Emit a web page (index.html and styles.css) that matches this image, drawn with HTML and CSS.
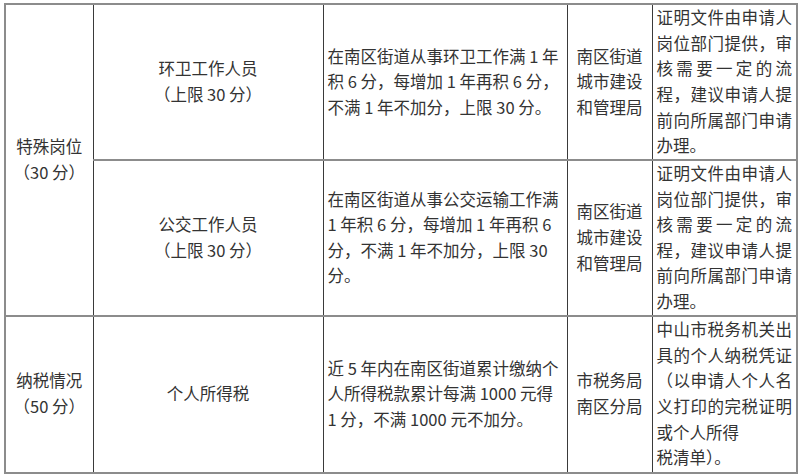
FILE: index.html
```html
<!DOCTYPE html>
<html lang="zh-CN">
<head>
<meta charset="utf-8">
<link rel="stylesheet" href="styles.css">
</head>
<body>
<table class="grid">
  <colgroup>
    <col class="c1"><col class="c2"><col class="c3"><col class="c4"><col class="c5">
  </colgroup>
  <tr class="r1">
    <td class="center" rowspan="2">特殊岗位<br>（30 分）</td>
    <td class="center">环卫工作人员<br>（上限 30 分）</td>
    <td class="desc">在南区街道从事环卫工作满 1 年<br>积 6 分，每增加 1 年再积 6 分，<br>不满 1 年不加分，上限 30 分。</td>
    <td class="center">南区街道城市建设和管理局</td>
    <td class="note">证明文件由申请人岗位部门提供，审核需要一定的流程，建议申请人提前向所属部门申请办理。</td>
  </tr>
  <tr class="r2">
    <td class="center">公交工作人员<br>（上限 30 分）</td>
    <td class="desc">在南区街道从事公交运输工作满<br>1 年积 6 分，每增加 1 年再积 6<br>分，不满 1 年不加分，上限 30<br>分。</td>
    <td class="center">南区街道城市建设和管理局</td>
    <td class="note">证明文件由申请人岗位部门提供，审核需要一定的流程，建议申请人提前向所属部门申请办理。</td>
  </tr>
  <tr class="r3">
    <td class="center">纳税情况<br>（50 分）</td>
    <td class="center">个人所得税</td>
    <td class="desc">近 5 年内在南区街道累计缴纳个<br>人所得税款累计每满 1000 元得<br>1 分，不满 1000 元不加分。</td>
    <td class="center">市税务局南区分局</td>
    <td class="note">中山市税务机关出具的个人纳税凭证（以申请人个人名义打印的完税证明或个人所得<br>税清单）。</td>
  </tr>
</table>
</body>
</html>
```

FILE: styles.css
```css
html, body {
  background: #ffffff;
}
body {
  margin: 3px 0 0 4px;
  font-family: "Noto Sans CJK SC", "Microsoft YaHei", sans-serif;
  font-size: 16.5px;
  line-height: 25.6px;
  color: #333333;
}
.grid {
  border-collapse: collapse;
  table-layout: fixed;
  width: 792px;
  border: 2px solid #8c8c8c;
}
.c1 { width: 88px; }
.c2 { width: 230px; }
.c3 { width: 244px; }
.c4 { width: 85px; }
.c5 { width: 145px; }
.grid td {
  border-left: 1px solid #3a3a3a;
  border-right: 1px solid #3a3a3a;
  border-top: 2px solid #8c8c8c;
  border-bottom: 2px solid #8c8c8c;
  padding: 0 4px;
  vertical-align: middle;
}
.r1 { height: 156px; }
.r2 { height: 155px; }
.r3 { height: 157px; }
.center {
  text-align: center;
}
.desc {
  text-align: left;
}
.note {
  text-align: justify;
}
```
